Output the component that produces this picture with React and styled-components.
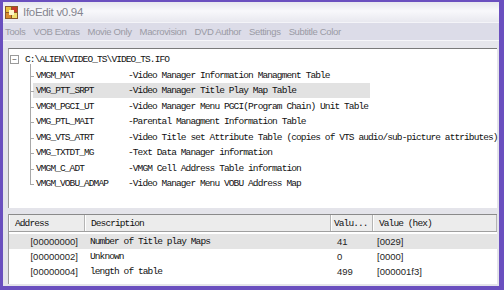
import React from "react";
import styled, { createGlobalStyle } from "styled-components";

const treeItems = [
  ["VMGM_MAT", "-Video Manager Information Managment Table"],
  ["VMG_PTT_SRPT", "-Video Manager Title Play Map Table"],
  ["VMGM_PGCI_UT", "-Video Manager Menu PGCI(Program Chain) Unit Table"],
  ["VMG_PTL_MAIT", "-Parental Managment Information Table"],
  ["VMG_VTS_ATRT", "-Video Title set Attribute Table (copies of VTS audio/sub-picture attributes)"],
  ["VMG_TXTDT_MG", "-Text Data Manager information"],
  ["VMGM_C_ADT", "-VMGM Cell Address Table information"],
  ["VMGM_VOBU_ADMAP", "-Video Manager Menu VOBU Address Map"],
];

const rows = [
  ["[00000000]", "Number of Title play Maps", "41", "[0029]"],
  ["[00000002]", "Unknown", "0", "[0000]"],
  ["[00000004]", "length of table", "499", "[000001f3]"],
];

const menus = ["Tools", "VOB Extras", "Movie Only", "Macrovision", "DVD Author", "Settings", "Subtitle Color"];

const AppIcon = () => (
  <svg width="13" height="13" viewBox="0 0 13 13">
    <rect x="0" y="0" width="13" height="13" fill="#8a5a2a" />
    <rect x="1" y="1" width="5" height="5" fill="#e8c040" />
    <rect x="7" y="1" width="5" height="5" fill="#c83a2a" />
    <rect x="1" y="7" width="5" height="5" fill="#d88a30" />
    <rect x="7" y="7" width="5" height="5" fill="#f0e070" />
    <rect x="4" y="4" width="5" height="5" fill="#fff6c8" />
  </svg>
);

export default function App() {
  return (
    <>
      <Global />
      <Window>
        <TitleBar>
          <AppIcon />
          <Title>IfoEdit v0.94</Title>
        </TitleBar>
        <MenuBar>
          {menus.map((m) => (
            <MenuItem key={m}>{m}</MenuItem>
          ))}
        </MenuBar>
        <Strip />
        <Body>
          <TreePanel>
            <RootRow>
              <ExpandBox>−</ExpandBox>
              <Mono>C:\ALIEN\VIDEO_TS\VIDEO_TS.IFO</Mono>
            </RootRow>
            <Children>
              {treeItems.map(([name, desc], i) => (
                <TreeRow key={name} $last={i === treeItems.length - 1}>
                  <TreeLabel $selected={i === 1}>
                    <NameCell>{name}</NameCell>
                    <Mono>{desc}</Mono>
                  </TreeLabel>
                </TreeRow>
              ))}
            </Children>
          </TreePanel>
          <Splitter />
          <ListPanel>
            <HeaderRow>
              <HeadCell $w={76} $pad={5}>Address</HeadCell>
              <HeadCell $w={246} $pad={5}>Description</HeadCell>
              <HeadCell $w={42} $pad={2}>Valu...</HeadCell>
              <HeadCell $pad={5} $grow>Value (hex)</HeadCell>
            </HeaderRow>
            <Rows>
              {rows.map(([addr, desc, val, hex], i) => (
                <DataRow key={addr} $selected={i === 0}>
                  <AddrCell>{addr}</AddrCell>
                  <DescCell>{desc}</DescCell>
                  <ValCell>{val}</ValCell>
                  <HexCell>{hex}</HexCell>
                </DataRow>
              ))}
            </Rows>
          </ListPanel>
        </Body>
      </Window>
    </>
  );
}

const Global = createGlobalStyle`
  html, body {
    margin: 0;
    padding: 0;
    overflow: hidden;
    background: #ffffff;
  }
`;

const Window = styled.div`
  width: 504px;
  height: 290px;
  box-sizing: border-box;
  display: flex;
  flex-direction: column;
  border-left: 3px solid #6a4fbf;
  border-right: 5px solid #6a4fbf;
  border-top: 2px solid #6a4fbf;
  border-bottom: 4px solid #6a4fbf;
  background: #e2e2ea;
  font-family: "Liberation Sans", Arial, sans-serif;
`;

const TitleBar = styled.div`
  height: 20px;
  display: flex;
  align-items: center;
  gap: 5px;
  padding-left: 2px;
  background: linear-gradient(#e6e6ee, #f8f8fb 45%, #e8e8ef);
  border-bottom: 1px solid #f4f4f8;
`;

const Title = styled.span`
  font-size: 11.5px;
  letter-spacing: -0.3px;
  color: #85858f;
`;

const MenuBar = styled.div`
  height: 17px;
  display: flex;
  align-items: center;
  gap: 8px;
  padding-left: 2px;
  background: #dcdce8;
`;

const MenuItem = styled.span`
  font-size: 9.5px;
  letter-spacing: -0.35px;
  color: #9a9aa4;
`;

const Strip = styled.div`
  height: 7px;
  background: #e6e6ec;
  border-top: 1px solid #f6f6f9;
`;

const Body = styled.div`
  flex: 1;
  display: flex;
  flex-direction: column;
  padding: 0 2px 2px 5px;
  background: #e4e4ea;
`;

const TreePanel = styled.div`
  height: 160px;
  box-sizing: border-box;
  background: #ffffff;
  border-top: 1px solid #7a7a7a;
  border-left: 1px solid #9a9a9a;
  padding-top: 3px;
`;

const Mono = styled.span`
  font-family: "Liberation Mono", "Courier New", monospace;
  font-size: 9.5px;
  letter-spacing: -0.9px;
  color: #111;
  white-space: pre;
`;

const RootRow = styled.div`
  height: 15.5px;
  display: flex;
  align-items: center;
  padding-left: 1px;
  gap: 6px;
`;

const ExpandBox = styled.span`
  width: 7px;
  height: 7px;
  border: 1px solid #9a9a9a;
  display: flex;
  align-items: center;
  justify-content: center;
  font-size: 8px;
  line-height: 1;
  color: #444;
`;

const Children = styled.div`
  display: flex;
  flex-direction: column;
`;

const TreeRow = styled.div`
  position: relative;
  height: 15.5px;
  display: flex;
  align-items: center;
  padding-left: 24px;

  &::before {
    content: "";
    position: absolute;
    left: 21px;
    top: -4px;
    height: ${(p) => (p.$last ? "12px" : "calc(100% + 4px)")};
    border-left: 1px solid #a8a8a8;
  }

  &::after {
    content: "";
    position: absolute;
    left: 21px;
    top: 8px;
    width: 4px;
    border-top: 1px solid #a8a8a8;
  }
`;

const TreeLabel = styled.div`
  display: flex;
  align-items: center;
  height: 15px;
  width: ${(p) => (p.$selected ? "334px" : "auto")};
  padding-left: 3px;
  background: ${(p) => (p.$selected ? "#e2e2e2" : "transparent")};
`;

const NameCell = styled(Mono)`
  width: 92px;
  flex-shrink: 0;
`;

const Splitter = styled.div`
  height: 6px;
  background: #e4e4ea;
`;

const ListPanel = styled.div`
  flex: 1;
  background: #ffffff;
  display: flex;
  flex-direction: column;
  border-left: 1px solid #9a9a9a;
`;

const HeaderRow = styled.div`
  height: 16px;
  display: flex;
  background: #ececec;
  border-top: 1px solid #8a8a8a;
  border-bottom: 1px solid #a0a0a0;
`;

const HeadCell = styled(Mono)`
  box-sizing: border-box;
  width: ${(p) => (p.$w ? `${p.$w}px` : "auto")};
  flex: ${(p) => (p.$grow ? 1 : "none")};
  padding-left: ${(p) => p.$pad}px;
  display: flex;
  align-items: center;
  border-right: 1px solid #b4b4b4;
  border-left: 1px solid #ffffff;
`;

const Rows = styled.div`
  display: flex;
  flex-direction: column;
  padding-top: 2px;
`;

const DataRow = styled.div`
  height: 15px;
  display: flex;
  align-items: center;
  background: ${(p) => (p.$selected ? "#e4e4e4" : "transparent")};
`;

const Num = styled.span`
  font-family: "Liberation Sans", Arial, sans-serif;
  font-size: 9.5px;
  color: #1e1e1e;
  box-sizing: border-box;
`;

const AddrCell = styled(Num)`
  width: 76px;
  text-align: right;
  padding-right: 7px;
`;

const DescCell = styled(Mono)`
  width: 246px;
  box-sizing: border-box;
  padding-left: 5px;
`;

const ValCell = styled(Num)`
  width: 42px;
  padding-left: 6px;
`;

const HexCell = styled(Num)`
  padding-left: 4px;
`;
